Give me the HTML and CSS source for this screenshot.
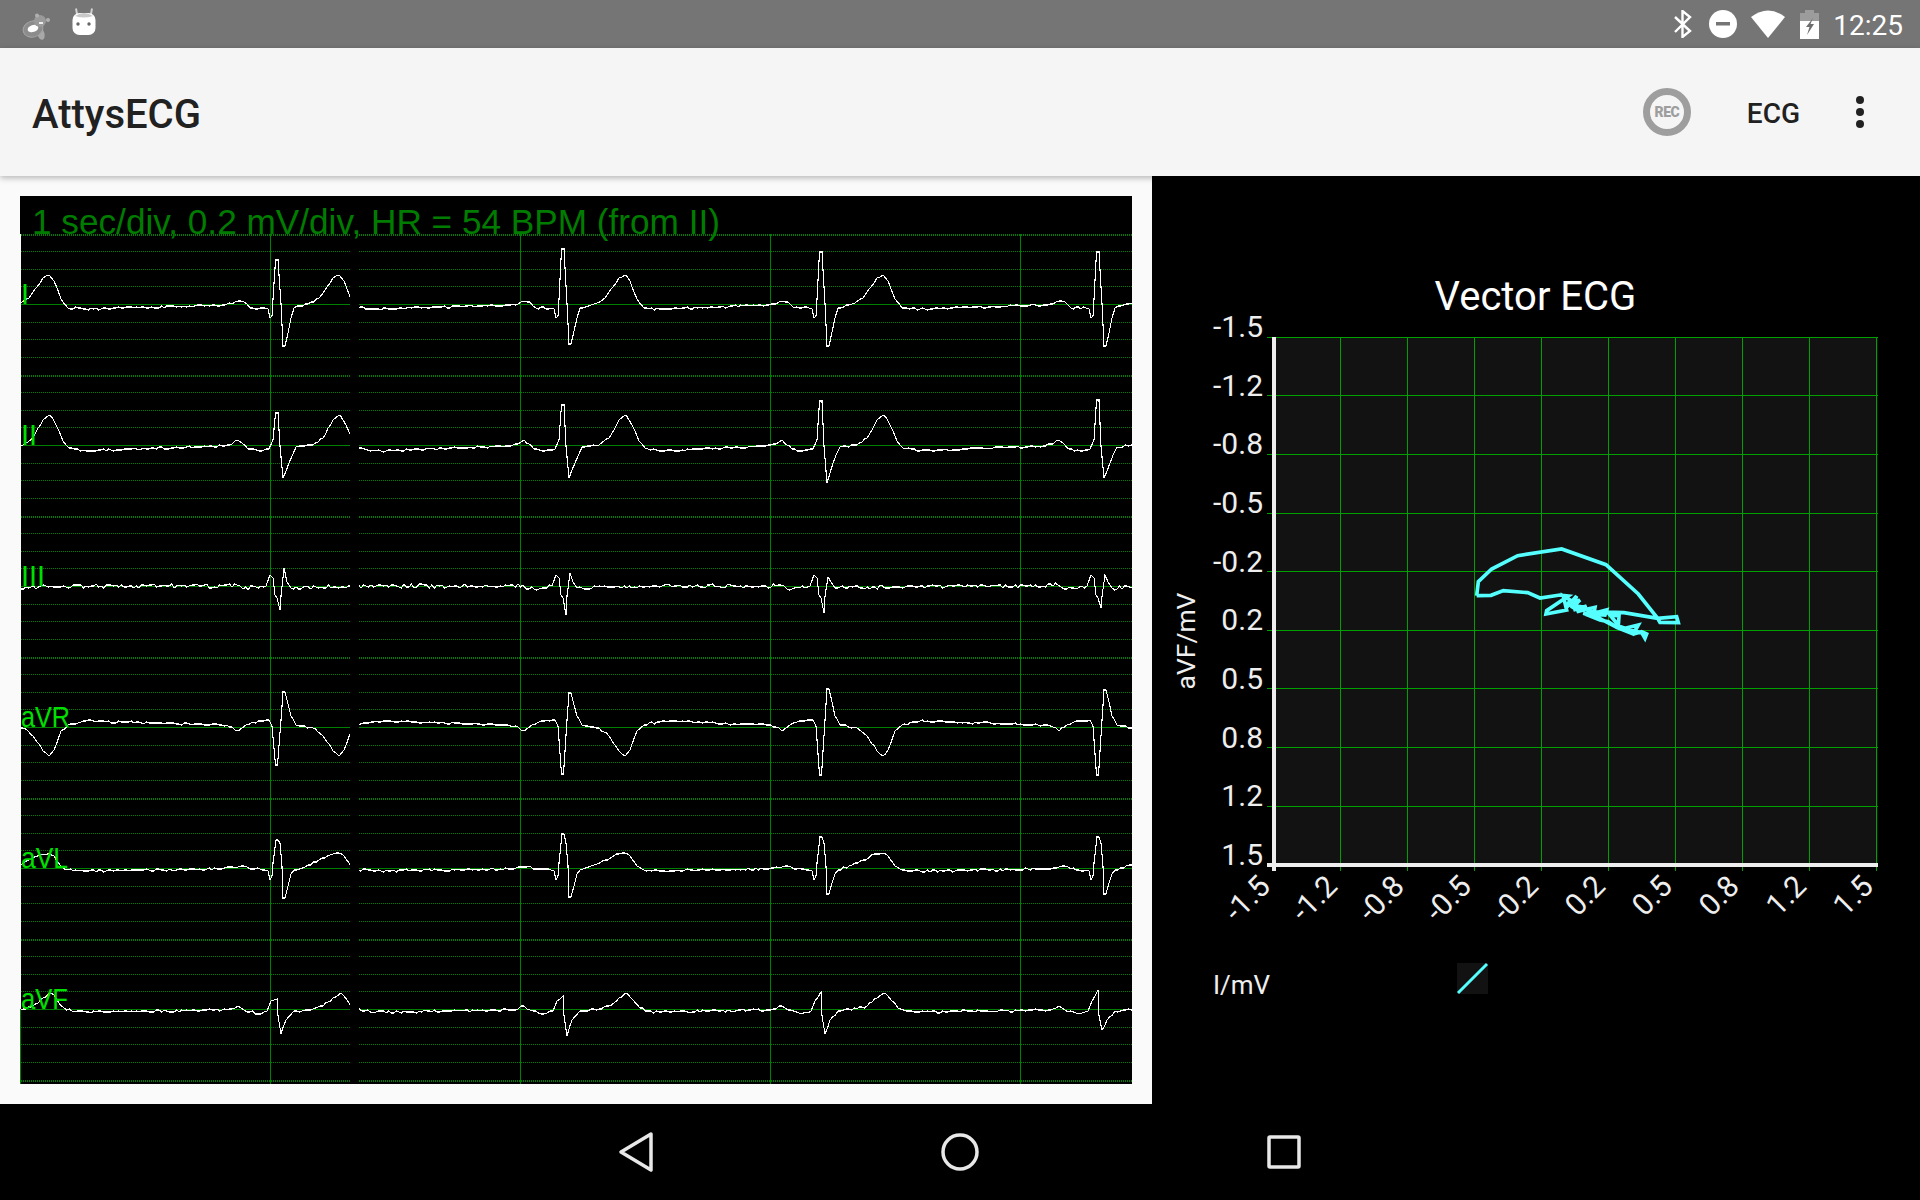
FILE: index.html
```html
<!DOCTYPE html>
<html lang="en">
<head>
    <meta charset="UTF-8">
    <meta name="viewport" content="width=device-width, initial-scale=1.0">
    <title>AttysECG</title>
    <link rel="stylesheet" href="styles.css">
</head>
<body>
    <div class="status-bar">
        <div class="status-left">
            <svg class="icon-beaver" width="30" height="28" viewBox="0 0 30 28">
                <ellipse cx="19" cy="21" rx="3.5" ry="6" transform="rotate(-15 19 21)" fill="#a8a8a8"/>
                <ellipse cx="11" cy="16" rx="10" ry="8" transform="rotate(-18 11 16)" fill="#8c8c8c" stroke="#a6a6a6"/>
                <ellipse cx="11" cy="15.500" rx="5.500" ry="3.500" transform="rotate(-18 11 15.500)" fill="#fff"/>
                <circle cx="18" cy="8" r="6" fill="#9a9a9a"/>
                <circle cx="15" cy="2.500" r="2" fill="#b0b0b0"/>
                <circle cx="26" cy="7" r="2" fill="#b0b0b0"/>
                <rect x="17" y="9" width="4" height="2" fill="#eee"/>
            </svg>
            <svg class="icon-android" width="24" height="28" viewBox="0 0 24 28">
                <path d="M5 6 L4 0.500 M19 6 L20 0.500" stroke="#d0d0d0" stroke-width="2" fill="none"/>
                <rect x="0.500" y="5" width="23" height="22" rx="7" fill="#fff"/>
                <path d="M3 8 Q12 2 21 8 Q12 11 3 8 Z" fill="#c8c8c8"/>
                <circle cx="6" cy="16" r="1.700" fill="#666"/>
                <circle cx="17" cy="16" r="1.700" fill="#666"/>
            </svg>
        </div>
        <div class="status-right">
            <svg class="icon-bt" width="18" height="28" viewBox="0 0 18 28">
                <path d="M1 7 L16 21 L8.500 27 V1 L16 7 L1 22" stroke="#fff" stroke-width="2.400" fill="none"/>
            </svg>
            <svg class="icon-dnd" width="28" height="28" viewBox="0 0 28 28">
                <circle cx="14" cy="14" r="14" fill="#fff"/>
                <rect x="7" y="12" width="14" height="3.500" fill="#757575"/>
            </svg>
            <svg class="icon-wifi" width="34" height="28" viewBox="0 0 34 28">
                <path d="M0 7 Q17 -6 34 7 L17 28 Z" fill="#fff"/>
            </svg>
            <svg class="icon-battery" width="19" height="29" viewBox="0 0 19 29">
                <path d="M5 0 H14 V3 H19 V29 H0 V3 H5 Z" fill="#9c9c9c"/>
                <rect x="0" y="11" width="19" height="18" fill="#fff"/>
                <path d="M13 8 L6 17 H9.500 L7 25 L14 14 H10.500 L13 8 Z" fill="#6e6e6e"/>
            </svg>
            <span class="clock">12:25</span>
        </div>
    </div>

    <div class="app-bar">
        <h1 class="app-title">AttysECG</h1>
        <div class="app-actions">
            <div class="rec-button"><span>REC</span></div>
            <span class="action-text">ECG</span>
            <div class="overflow-dots"><i></i><i></i><i></i></div>
        </div>
    </div>

    <div class="main">
        <div class="scope-panel">
            <svg id="scope" class="scope" width="1112" height="888" viewBox="20 196 1112 888">
                <g id="scope-grid"></g>
                <g id="scope-traces"></g>
                <rect class="sweep-gap" x="350" y="234" width="9" height="850"/>
                <rect class="scope-edge" x="20" y="234" width="1" height="775"/>
                <line class="grid-solid" x1="20.500" y1="1009" x2="20.500" y2="1084"/>
                <text class="scope-title" x="32" y="234">1 sec/div, 0.2 mV/div, HR = 54 BPM (from II)</text>
                <text class="lead-label" x="21" y="304">I</text>
                <text class="lead-label" x="21" y="445">II</text>
                <text class="lead-label" x="21" y="586">III</text>
                <text class="lead-label" x="21" y="727" textLength="49" lengthAdjust="spacingAndGlyphs">aVR</text>
                <text class="lead-label" x="21" y="868" textLength="47" lengthAdjust="spacingAndGlyphs">aVL</text>
                <text class="lead-label" x="21" y="1009" textLength="47" lengthAdjust="spacingAndGlyphs">aVF</text>
            </svg>
        </div>
        <div class="vector-panel">
            <svg id="vector" class="vector" width="768" height="928" viewBox="1152 176 768 928">
                <text class="vector-title" x="1535.500" y="310">Vector ECG</text>
                <rect class="plot-bg" x="1273" y="337" width="605" height="528"/>
                <g id="vector-grid"></g>
                <g class="y-labels">
                    <text x="1263" y="337">-1.5</text>
                    <text x="1263" y="396">-1.2</text>
                    <text x="1263" y="454">-0.8</text>
                    <text x="1263" y="513">-0.5</text>
                    <text x="1263" y="572">-0.2</text>
                    <text x="1263" y="630">0.2</text>
                    <text x="1263" y="689">0.5</text>
                    <text x="1263" y="748">0.8</text>
                    <text x="1263" y="806">1.2</text>
                    <text x="1263" y="865">1.5</text>
                </g>
                <g class="x-labels">
                    <text transform="translate(1272 888) rotate(-45)">-1.5</text>
                    <text transform="translate(1339 888) rotate(-45)">-1.2</text>
                    <text transform="translate(1406 888) rotate(-45)">-0.8</text>
                    <text transform="translate(1473 888) rotate(-45)">-0.5</text>
                    <text transform="translate(1540 888) rotate(-45)">-0.2</text>
                    <text transform="translate(1607 888) rotate(-45)">0.2</text>
                    <text transform="translate(1674 888) rotate(-45)">0.5</text>
                    <text transform="translate(1741 888) rotate(-45)">0.8</text>
                    <text transform="translate(1808 888) rotate(-45)">1.2</text>
                    <text transform="translate(1875 888) rotate(-45)">1.5</text>
                </g>
                <text class="axis-name" transform="translate(1195 641) rotate(-90)">aVF/mV</text>
                <line class="axis" x1="1273.500" y1="337" x2="1273.500" y2="871"/>
                <line class="axis" x1="1267" y1="865" x2="1878" y2="865"/>
                <polyline class="vector-loop" transform="translate(1420 520) scale(0.3333)" points="170,227 213,226 250,212 323,218 360,234 420,225 445,228 380,272 378,282 440,270 430,228 450,240 440,262 470,228 455,265 480,240 450,255 495,262 460,270 500,258 470,275 525,262 522,280 560,270 555,285 490,280 540,300 565,305 590,322 640,342 655,315 615,325 595,318 597,288 570,285 597,318 640,342 665,335 680,342 675,355 665,338 590,322 500,275 612,278 713,295 770,290 775,308 720,307 713,295 655,222 558,134 425,87 293,107 215,147 175,185 170,227"/>
                <text class="legend-name" x="1213" y="994">I/mV</text>
                <rect class="plot-bg" x="1457" y="963" width="31" height="31"/>
                <line class="legend-line" x1="1458" y1="993" x2="1487" y2="964"/>
            </svg>
        </div>
    </div>

    <div class="nav-bar">
        <svg width="40" height="42" viewBox="0 0 40 42">
            <path d="M35 3 L5 21 L35 39 Z" class="nav-shape"/>
        </svg>
        <svg width="40" height="42" viewBox="0 0 40 42">
            <circle cx="20" cy="21" r="17" class="nav-shape"/>
        </svg>
        <svg width="40" height="42" viewBox="0 0 40 42">
            <rect x="5" y="6" width="30" height="30" rx="1" class="nav-shape"/>
        </svg>
    </div>

    <script src="script.js"></script>
</body>
</html>
```

FILE: styles.css
```css
* {
    box-sizing: border-box;
}
body {
    margin: 0;
    width: 1920px;
    height: 1200px;
    overflow: hidden;
    display: flex;
    flex-direction: column;
    background-color: #000;
    font-family: Roboto, sans-serif;
}
svg {
    display: block;
}
.status-bar {
    height: 48px;
    flex: none;
    display: flex;
    justify-content: space-between;
    align-items: center;
    background-color: #757575;
}
.status-left {
    height: 48px;
    display: flex;
    align-items: flex-start;
    padding-left: 22px;
    gap: 20px;
}
.icon-beaver {
    margin-top: 13px;
}
.icon-android {
    margin-top: 8px;
}
.status-right {
    display: flex;
    align-items: center;
    padding-right: 17px;
}
.icon-bt {
    margin-right: 17px;
}
.icon-dnd {
    margin-right: 14px;
}
.icon-wifi {
    margin-right: 15px;
}
.icon-battery {
    margin-right: 14px;
}
.clock {
    color: #fff;
    font-size: 28px;
    line-height: 48px;
    padding-top: 3px;
}
.app-bar {
    position: relative;
    z-index: 2;
    height: 128px;
    flex: none;
    display: flex;
    justify-content: space-between;
    align-items: center;
    padding: 0 0 0 32px;
    background-color: #f5f5f5;
    box-shadow: 0 2px 6px rgba(0, 0, 0, 0.28);
}
.app-title {
    margin: 4px 0 0;
    font-size: 40px;
    font-weight: 500;
    color: #212121;
}
.app-actions {
    display: flex;
    align-items: center;
    padding-right: 56px;
}
.rec-button {
    width: 48px;
    height: 48px;
    display: flex;
    align-items: center;
    justify-content: center;
    border: 7px solid #9e9e9e;
    border-radius: 50%;
    margin-top: -1px;
    margin-right: 56px;
}
.rec-button span {
    font-size: 14px;
    font-weight: 900;
    letter-spacing: -0.5px;
    color: #9e9e9e;
}
.action-text {
    font-size: 28px;
    font-weight: 500;
    color: #212121;
    margin-top: 2px;
    margin-right: 56px;
}
.overflow-dots {
    display: flex;
    flex-direction: column;
    gap: 4px;
    width: 8px;
}
.overflow-dots i {
    display: block;
    width: 8px;
    height: 8px;
    border-radius: 50%;
    background-color: #212121;
}
.main {
    flex: 1;
    display: flex;
    min-height: 0;
}
.scope-panel {
    width: 1152px;
    padding: 20px;
    background-color: #fafafa;
}
.scope {
    background-color: #000;
}
.scope-edge {
    fill: #fafafa;
}
.sweep-gap {
    fill: #000;
}
.grid-solid {
    stroke: #008000;
    stroke-width: 1;
    shape-rendering: crispEdges;
}
.grid-dotted {
    stroke: #008000;
    stroke-width: 1;
    stroke-dasharray: 1 1;
    shape-rendering: crispEdges;
}
.grid-dotted-thick {
    stroke-width: 2;
}
.trace {
    fill: none;
    stroke: #fff;
    stroke-width: 1.1;
    shape-rendering: crispEdges;
}
.scope-title {
    font-family: "Liberation Sans", Arial, sans-serif;
    font-size: 35.200px;
    fill: #007c00;
}
.lead-label {
    font-family: "Liberation Sans", Arial, sans-serif;
    font-size: 29px;
    fill: #00e000;
}
.vector-panel {
    width: 768px;
    background-color: #000;
}
.vector text {
    font-family: Roboto, sans-serif;
}
.vector-title {
    font-size: 40px;
    fill: #fff;
    text-anchor: middle;
}
.plot-bg {
    fill: #121212;
}
.plot-grid {
    stroke: #00a000;
    stroke-width: 1;
    shape-rendering: crispEdges;
}
.y-labels text {
    font-size: 30px;
    fill: #eee;
    text-anchor: end;
}
.x-labels text {
    font-size: 30px;
    fill: #eee;
    text-anchor: end;
}
.axis-name {
    font-size: 26.500px;
    fill: #eee;
    text-anchor: middle;
}
.legend-name {
    font-size: 26px;
    fill: #eee;
}
.axis {
    stroke: #eee;
    stroke-width: 4;
    shape-rendering: crispEdges;
}
.vector-loop {
    fill: none;
    stroke: #55ffff;
    stroke-width: 11;
    stroke-linejoin: miter;
}
.legend-line {
    stroke: #55ffff;
    stroke-width: 3;
}
.nav-bar {
    height: 96px;
    flex: none;
    display: flex;
    justify-content: center;
    align-items: center;
    gap: 284px;
    background-color: #000;
}
.nav-shape {
    fill: none;
    stroke: #e8e8e8;
    stroke-width: 3.500;
    stroke-linejoin: round;
}
```

FILE: script.js
```js
const SVG_NS = "http://www.w3.org/2000/svg";

function addLine(parent, className, x1, y1, x2, y2) {
    const line = document.createElementNS(SVG_NS, "line");
    line.setAttribute("class", className);
    line.setAttribute("x1", x1);
    line.setAttribute("y1", y1);
    line.setAttribute("x2", x2);
    line.setAttribute("y2", y2);
    parent.appendChild(line);
}

// R peak positions of the beats on screen, the first one is off to the left
const beats = [-13, 277, 563, 821, 1098];

// wave points are [dx from R, dy from baseline], "r" and "s" differ per beat
const leads = [
    {
        base: 304, noise: 1,
        rs: [[-44, 42], [-44, 42], [-55, 40], [-52, 42], [-52, 42]],
        wave: [[-55, 1], [-45, 0], [-39, -3], [-33, -2], [-27, 4], [-12, 4], [-9, 5], [-7, 14], [-5, 12], [-4, -5], [-1.5, "r"], [1, "r"], [4, 0], [6, "s"], [8, "s"], [14, 14], [17, 4], [31, 0], [42, -6], [50, -17], [56, -26], [62, -29], [67, -23], [74, -5], [81, 4], [99, 5]]
    },
    {
        base: 445, noise: 1,
        rs: [[-32, 33], [-32, 33], [-40, 33], [-44, 38], [-45, 33]],
        wave: [[-55, 1], [-45, -1], [-39, -5], [-29, 4], [-18, 6], [-8, 4], [-4, -5], [-1.5, "r"], [1, "r"], [3, 1], [6, "s"], [12, 18], [19, 2], [36, 0], [46, -7], [56, -25], [63, -30], [69, -20], [76, -4], [82, 3], [99, 6]]
    },
    {
        base: 586, noise: 1.8,
        rs: [[-18, 24], [-18, 24], [-13, 29], [-9, 27], [-11, 22]],
        wave: [[-55, 0], [-40, -1], [-34, 3], [-11, 0], [-7, -11], [-4, -8], [-2, 9], [0, 12], [3, "s"], [4, 10], [7, "r"], [10, -4], [14, 2], [99, 0]]
    },
    {
        base: 727, noise: 1,
        rs: [[-35, 38], [-35, 38], [-34, 47], [-38, 48], [-37, 48]],
        wave: [[-55, -2], [-45, 0], [-39, 4], [-31, -2], [-24, -5], [-8, -7], [-5, -1], [-1.5, "s"], [0.5, "s"], [4, -7], [6, "r"], [8, "r"], [14, -11], [19, -2], [36, 1], [46, 9], [56, 24], [62, 29], [67, 23], [74, 4], [81, -2], [99, -6]]
    },
    {
        base: 868, noise: 1.2,
        rs: [[-28, 30], [-28, 30], [-34, 29], [-31, 26], [-31, 26]],
        wave: [[-55, 1], [-39, -1], [-33, -2], [-27, 1], [-12, 2], [-9, 3], [-7, 12], [-5, 8], [-4, -5], [-1, "r"], [1, "r"], [3, -25], [5, -2], [6, "s"], [8, "s"], [14, 6], [17, 2], [31, -3], [42, -8], [56, -14], [62, -15], [67, -12], [74, -2], [81, 2], [99, 3]]
    },
    {
        base: 1009, noise: 1.2,
        rs: [[-10, 25], [-10, 25], [-13, 27], [-17, 25], [-19, 21]],
        wave: [[-55, 1], [-45, 0], [-39, -3], [-33, 1], [-19, 5], [-10, 2], [-6, -8], [0, "r"], [1, 7], [4, "s"], [9, 11], [17, 2], [36, 0], [46, -3], [56, -11], [64, -16], [70, -9], [77, -1], [85, 2], [99, 3]]
    }
];

// small repeatable generator so the noise is the same on every load
let seed = 20190;
function random() {
    seed = (seed * 16807) % 2147483647;
    return seed / 2147483647;
}

function tracePoints(lead) {
    const keys = [];
    beats.forEach(function (rx, b) {
        lead.wave.forEach(function (p) {
            let dy = p[1];
            if (dy === "r") dy = lead.rs[b][0];
            if (dy === "s") dy = lead.rs[b][1];
            keys.push([rx + p[0], lead.base + dy]);
        });
    });

    const points = [];
    for (let i = 0; i < keys.length - 1; i++) {
        const a = keys[i];
        const b = keys[i + 1];
        points.push(a[0] + "," + Math.round(a[1]));
        // only the slow parts get noise, the QRS stays clean
        const steps = Math.floor((b[0] - a[0]) / 2.5);
        for (let s = 1; s < steps; s++) {
            const x = a[0] + (b[0] - a[0]) * s / steps;
            const y = a[1] + (b[1] - a[1]) * s / steps;
            const n = (random() - 0.5) * 2 * lead.noise;
            points.push(x.toFixed(1) + "," + Math.round(y + n));
        }
    }
    points.push(keys[keys.length - 1].join(","));
    return points.join(" ");
}

function drawScope() {
    const grid = document.getElementById("scope-grid");
    const traces = document.getElementById("scope-traces");

    // 8 divisions per lead, the solid one is the lead baseline
    const div = 141 / 8;
    for (let i = 0; i <= 48; i++) {
        const y = Math.round(233.5 + i * div) + 0.5;
        if (y > 1084) break;
        if (i % 8 === 4) {
            addLine(grid, "grid-solid", 20, y, 1132, y);
        } else if (i % 8 === 0) {
            addLine(grid, "grid-dotted grid-dotted-thick", 21, y, 1132, y);
        } else {
            addLine(grid, "grid-dotted", 21, y, 1132, y);
        }
    }
    for (let x = 270.5; x < 1132; x += 250) {
        addLine(grid, "grid-solid", x, 234, x, 1084);
    }

    leads.forEach(function (lead) {
        const line = document.createElementNS(SVG_NS, "polyline");
        line.setAttribute("class", "trace");
        line.setAttribute("points", tracePoints(lead));
        traces.appendChild(line);
    });
}

function drawVectorGrid() {
    const grid = document.getElementById("vector-grid");
    for (let i = 0; i < 9; i++) {
        const y = Math.floor(337.3 + i * 58.6) + 0.5;
        addLine(grid, "plot-grid", 1267, y, 1878, y);
    }
    for (let i = 1; i <= 9; i++) {
        const x = 1273.5 + i * 67;
        addLine(grid, "plot-grid", x, 337, x, 871);
    }
}

drawScope();
drawVectorGrid();
```
